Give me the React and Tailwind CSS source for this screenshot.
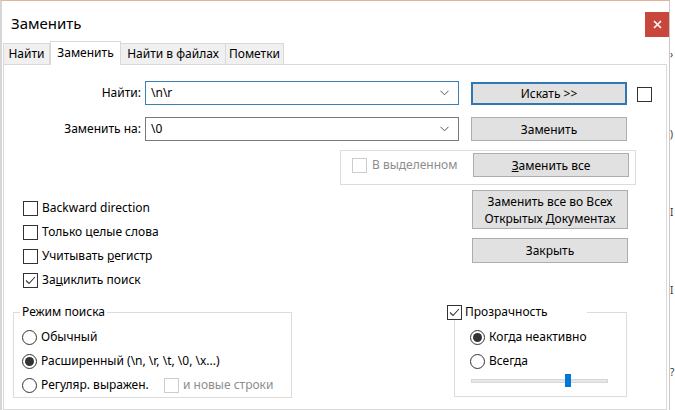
import React from 'react';

function Check({ checked, disabled }) {
  return (
    <span className={`w-[15px] h-[15px] shrink-0 border bg-white flex items-center justify-center ${disabled ? 'border-[#cccccc]' : 'border-[#333333]'}`}>
      {checked && (
        <svg width="13" height="13" viewBox="0 0 13 13">
          <polyline points="2,6.5 5,9.5 11,3" fill="none" stroke="#333" strokeWidth="1.1" />
        </svg>
      )}
    </span>
  );
}

function Radio({ checked }) {
  return (
    <span className="w-[15px] h-[15px] shrink-0 rounded-full border border-[#333333] bg-white flex items-center justify-center">
      {checked && <span className="w-[9px] h-[9px] rounded-full bg-[#333333]" />}
    </span>
  );
}

function Combo({ value, focused }) {
  return (
    <div className={`w-[314px] h-[24px] border flex items-center pl-[5px] pr-[9px] ${focused ? 'border-[#3b80b4]' : 'border-[#7a7a7a]'}`}>
      <span className="flex-1">{value}</span>
      <svg width="9" height="6" viewBox="0 0 9 6">
        <polyline points="0.5,0.8 4.5,4.8 8.5,0.8" fill="none" stroke="#555" strokeWidth="1" />
      </svg>
    </div>
  );
}

function Btn({ children, focused, h = 'h-[24px]' }) {
  return (
    <div className={`w-[156px] ${h} bg-[#e1e1e1] flex items-center justify-center text-center leading-[17px] ${focused ? 'border-2 border-[#2f78b5]' : 'border border-[#adadad]'}`}>
      {children}
    </div>
  );
}

const options = [
  { label: 'Backward direction' },
  { label: 'Только целые слова' },
  { label: <>Учитывать <u>р</u>егистр</> },
  { label: <>За<u>ц</u>иклить поиск</>, checked: true },
];

export default function App() {
  return (
    <div className="w-[675px] h-[410px] overflow-hidden flex bg-white text-[12px] leading-[16px] text-black font-['Noto_Sans',sans-serif]">
      <div className="w-[670px] h-full shrink-0 flex flex-col border-l-2 border-l-[#d6d6d6] border-r border-r-[#c8c8c8] border-t border-t-[#e2b49b]">
        {/* title bar */}
        <div className="h-[40px] flex items-start justify-between">
          <span className="mt-[13px] ml-[9px] text-[15px] leading-[18px]">Заменить</span>
          <div className="mt-[11px] w-[24px] h-[25px] bg-[#c9463d] flex items-center justify-center">
            <svg width="9" height="9" viewBox="0 0 9 9">
              <path d="M1 1 L8 8 M8 1 L1 8" stroke="#fff" strokeWidth="1.6" />
            </svg>
          </div>
        </div>

        {/* tabs */}
        <div className="h-[23px] flex items-end pl-[1px]">
          <div className="w-[47px] h-[21px] bg-[#f0f0f0] border border-b-0 border-[#d9d9d9] flex items-center justify-center">Найти</div>
          <div className="w-[71px] h-[24px] -mb-px relative z-10 bg-white border border-b-0 border-[#d9d9d9] flex items-center justify-center pb-[2px]">Заменить</div>
          <div className="w-[105px] h-[21px] bg-[#f0f0f0] border border-b-0 border-l-0 border-[#d9d9d9] flex items-center justify-center">Найти в файлах</div>
          <div className="w-[58px] h-[21px] bg-[#f0f0f0] border border-b-0 border-l-0 border-[#d9d9d9] flex items-center justify-center">Пометки</div>
        </div>

        {/* panel */}
        <div className="flex-1 ml-px mr-[2px] border border-[#d9d9d9] bg-white">
          <div className="mt-[16px] flex items-center h-[24px]">
            <span className="w-[141px] pr-[4px] text-right">Найти:</span>
            <Combo value="\n\r" focused />
            <div className="ml-[12px]"><Btn focused h="h-[23px]">Искать &gt;&gt;</Btn></div>
            <div className="ml-[10px] mt-[2px]"><Check /></div>
          </div>

          <div className="mt-[12px] flex items-center h-[24px]">
            <span className="w-[141px] pr-[4px] text-right">Заменить на:</span>
            <Combo value="\0" />
            <div className="ml-[12px]"><Btn>Заменить</Btn></div>
          </div>

          <div className="mt-[9px] flex">
            <div className="ml-[336px] w-[296px] h-[35px] border border-[#dcdcdc] flex items-start pt-[2px]">
              <div className="h-[24px] flex items-center ml-[11px] text-[#8d8d8d]">
                <Check disabled />
                <span className="ml-[5px]">В выделенном</span>
              </div>
              <div className="ml-auto mr-[6px]"><Btn><span><u>З</u>аменить все</span></Btn></div>
            </div>
          </div>

          <div className="flex h-[107px]">
            <div className="ml-[19px] w-[449px] mt-[11px] flex flex-col">
              {options.map((o, i) => (
                <div key={i} className="h-[24px] flex items-center">
                  <Check checked={o.checked} />
                  <span className="ml-[4px]">{o.label}</span>
                </div>
              ))}
            </div>
            <div className="mt-[5px] flex flex-col gap-[9px]">
              <Btn h="h-[39px]"><span>Заменить все во Всех<br />Открытых <u>Д</u>окументах</span></Btn>
              <Btn h="h-[25px]">Закрыть</Btn>
            </div>
          </div>

          <div className="mt-[12px] flex items-start">
            <fieldset className="ml-[9px] w-[279px] h-[94px] border border-[#dcdcdc]">
              <legend className="ml-[6px] px-[2px]">Режим поиска</legend>
              <div className="mt-[5px] pl-[8px]">
                <div className="h-[24px] flex items-center">
                  <Radio />
                  <span className="ml-[4px]">Обычный</span>
                </div>
                <div className="h-[24px] flex items-center">
                  <Radio checked />
                  <span className="ml-[4px]">Расширенный (\n, \r, \t, \0, \x...)</span>
                </div>
                <div className="h-[24px] flex items-center">
                  <Radio />
                  <span className="ml-[4px] w-[123px]">Регуляр. выражен.</span>
                  <Check disabled />
                  <span className="ml-[4px] text-[#8d8d8d]">и новые строки</span>
                </div>
              </div>
            </fieldset>

            <fieldset className="ml-[162px] w-[173px] h-[93px] border border-[#dcdcdc]">
              <legend className="-ml-[8px] w-[140px] flex items-center">
                <Check checked />
                <span className="ml-[3px]">Прозрачность</span>
              </legend>
              <div className="mt-[5px] pl-[15px]">
                <div className="h-[24px] flex items-center">
                  <Radio checked />
                  <span className="ml-[4px]">Когда неактивно</span>
                </div>
                <div className="h-[24px] flex items-center">
                  <Radio />
                  <span className="ml-[4px]">Всегда</span>
                </div>
                <div className="mt-[1px] ml-[1px] w-[137px] h-[13px] relative flex items-center">
                  <div className="w-full h-[4px] bg-[#e7e7e7] border border-[#d6d6d6]" />
                  <div className="absolute left-[94px] top-0 w-[6px] h-[13px] bg-[#0078d7]" />
                </div>
              </div>
            </fieldset>
          </div>
        </div>
      </div>
      <div className="flex-1 relative overflow-hidden text-[10px] leading-[12px] text-[#333]">
        <span className="absolute left-0 top-[48px]">›</span>
        <span className="absolute left-0 top-[128px]">)</span>
        <span className="absolute left-0 top-[206px]">I</span>
        <span className="absolute left-0 top-[284px]">I</span>
        <span className="absolute left-0 top-[366px]">?</span>
      </div>
    </div>
  );
}
